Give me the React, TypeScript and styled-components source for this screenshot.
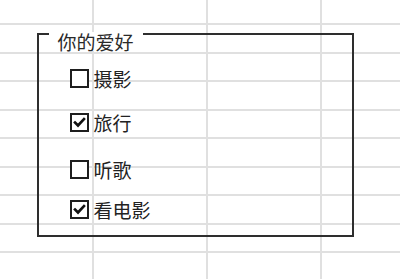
import React from 'react';
import styled, { createGlobalStyle } from 'styled-components';

const GlobalStyle = createGlobalStyle`
    html, body {
        margin: 0;
        padding: 0;
        background: #ffffff;
    }
    body {
        font-family: "Noto Sans CJK SC", "Noto Sans", sans-serif;
    }
`

const Sheet = styled.div`
    position: relative;
    width: 400px;
    height: 279px;
    overflow: hidden;
    background: #ffffff;
`

const CellGrid = styled.div`
    display: grid;
    grid-template-columns: repeat(5, 114px);
    grid-auto-rows: 28.5px;
    margin: -3.5px 0 0 -20.5px;
`

const Cell = styled.div`
    box-sizing: border-box;
    border-right: 2px solid #e0e0e0;
    border-bottom: 2px solid #e0e0e0;
`

const GroupBox = styled.div`
    position: absolute;
    left: 36.5px;
    top: 33px;
    width: 317px;
    height: 204px;
    box-sizing: border-box;
    border: 2px solid #2e2e2e;
    display: flex;
    flex-direction: column;
    padding: 0 0 0 31px;
`

const Legend = styled.div`
    position: absolute;
    left: 10px;
    top: -3.5px;
    padding: 0 9px;
    background: #ffffff;
    font-size: 19px;
    line-height: 19px;
    color: #2a2a2a;
    white-space: nowrap;
`

const Row = styled.label<{ $offset: number }>`
    display: flex;
    align-items: center;
    height: 20px;
    margin-top: ${props => props.$offset}px;
    font-size: 19px;
    line-height: 20px;
    color: #222222;
    white-space: nowrap;
`

const Box = styled.span`
    display: flex;
    align-items: center;
    justify-content: center;
    box-sizing: border-box;
    width: 19px;
    height: 19px;
    border: 2px solid #1e1e1e;
    background: #ffffff;
    margin-right: 5px;
    flex-shrink: 0;
`

const Check = () => (
    <svg width="15" height="15" viewBox="0 0 15 15">
        <path d="M3 7.5 L6 10.5 L12 4" fill="none" stroke="#111" strokeWidth="2.6" strokeLinecap="square" strokeLinejoin="miter" />
    </svg>
)

const hobbies = [
    { label: '摄影', checked: false, offset: 33.5 },
    { label: '旅行', checked: true, offset: 24 },
    { label: '听歌', checked: false, offset: 27 },
    { label: '看电影', checked: true, offset: 20 },
];

const App = () => {
    return (
        <Sheet>
            <GlobalStyle />
            <CellGrid>
                {Array.from({ length: 55 }).map((_, i) => <Cell key={i} />)}
            </CellGrid>
            <GroupBox>
                <Legend>你的爱好</Legend>
                {hobbies.map(h => (
                    <Row key={h.label} $offset={h.offset}>
                        <Box>{h.checked && <Check />}</Box>
                        {h.label}
                    </Row>
                ))}
            </GroupBox>
        </Sheet>
    );
};

export default App;
